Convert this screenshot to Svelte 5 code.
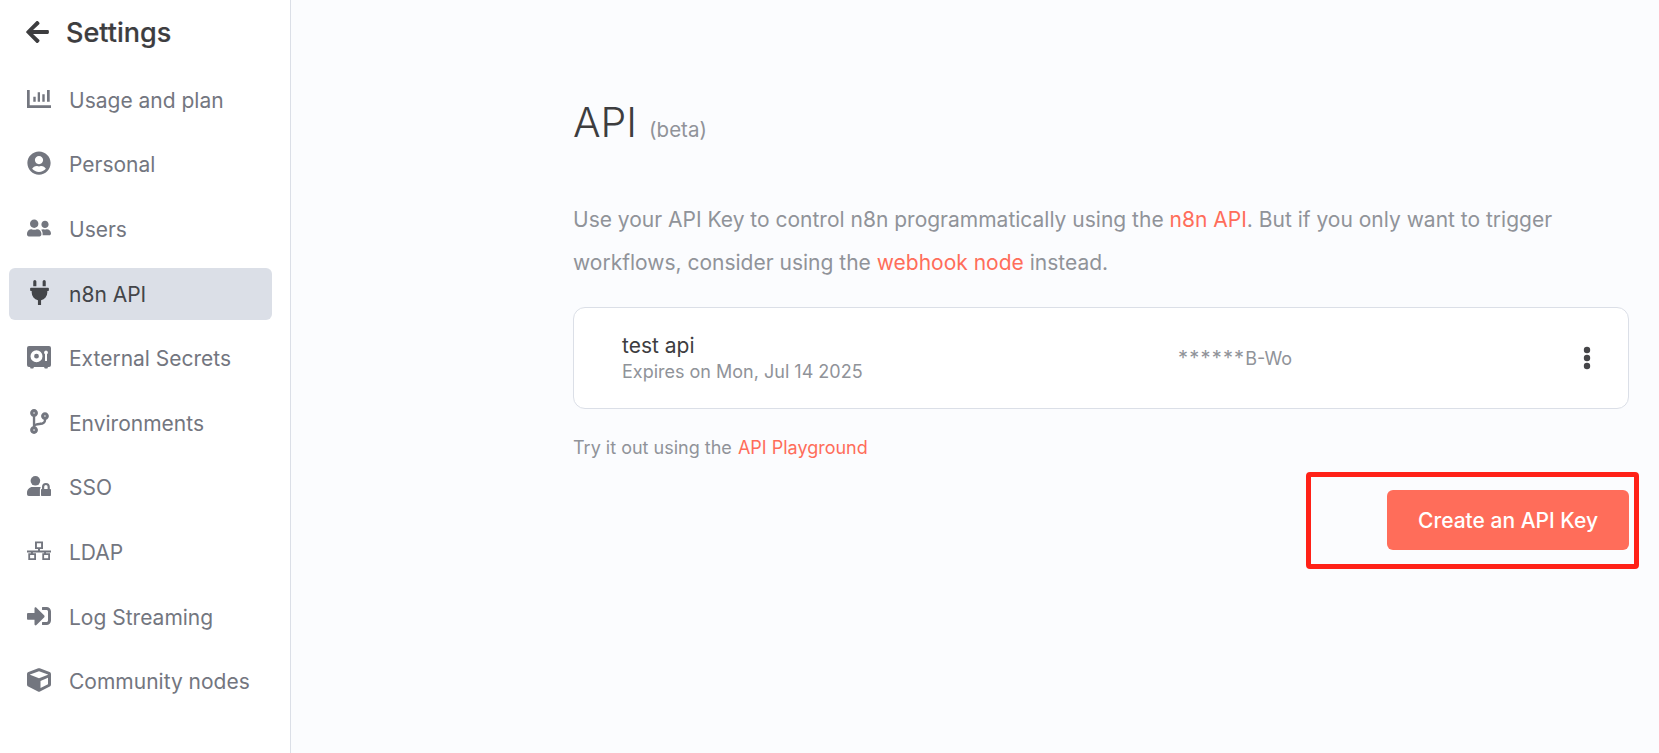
<script>
	const nav = [
		{ label: 'Usage and plan', icon: 'chart' },
		{ label: 'Personal', icon: 'user' },
		{ label: 'Users', icon: 'users' },
		{ label: 'n8n API', icon: 'plug', active: true },
		{ label: 'External Secrets', icon: 'vault' },
		{ label: 'Environments', icon: 'branch' },
		{ label: 'SSO', icon: 'lock' },
		{ label: 'LDAP', icon: 'network' },
		{ label: 'Log Streaming', icon: 'signin' },
		{ label: 'Community nodes', icon: 'cube' },
	];
</script>

<div class="layout">
	<aside class="sidebar">
		<header class="side-head">
			<svg class="back" viewBox="0 0 448 512"><path d="M257.5 445.1l-22.2 22.2c-9.4 9.4-24.6 9.4-33.9 0L7 273c-9.4-9.4-9.4-24.6 0-33.9L201.4 44.7c9.4-9.4 24.6-9.4 33.9 0l22.2 22.2c9.5 9.5 9.3 25-.4 34.3L136.6 216H424c13.3 0 24 10.7 24 24v32c0 13.3-10.7 24-24 24H136.6l120.5 114.8c9.8 9.3 10 24.8.4 34.3z"/></svg>
			<span>Settings</span>
		</header>
		<nav>
			{#each nav as item}
				<div class="item" class:active={item.active}>
					<span class="ic">
						{#if item.icon === 'chart'}
							<svg viewBox="0 0 24 24"><path d="M0 3h2.700v15.300H24V21H0z"/><path d="M6.300 9.700h2.400v5H6.300zM10.700 5.300H13v9.400h-2.300zM15.300 7.300h2.400v7.400h-2.400zM20 3h2.700v11.700H20z"/></svg>
						{:else if item.icon === 'user'}
							<svg viewBox="0 0 496 512"><path d="M248 8C111 8 0 119 0 256s111 248 248 248 248-111 248-248S385 8 248 8zm0 96c48.6 0 88 39.4 88 88s-39.4 88-88 88-88-39.4-88-88 39.4-88 88-88zm0 344c-58.7 0-111.3-26.6-146.5-68.2 18.8-35.4 55.6-59.8 98.5-59.8 2.4 0 4.8.4 7.1 1.1 13 4.2 26.6 6.9 40.9 6.9 14.3 0 28-2.7 40.9-6.9 2.3-.7 4.7-1.1 7.1-1.1 42.9 0 79.7 24.4 98.5 59.8C359.3 421.4 306.7 448 248 448z"/></svg>
						{:else if item.icon === 'users'}
							<svg viewBox="0 0 640 512"><path d="M192 256c61.9 0 112-50.1 112-112S253.9 32 192 32 80 82.1 80 144s50.1 112 112 112zm76.8 32h-8.3c-20.8 10-43.9 16-68.5 16s-47.6-6-68.5-16h-8.3C51.6 288 0 339.6 0 403.2V432c0 26.5 21.5 48 48 48h288c26.5 0 48-21.5 48-48v-28.8c0-63.6-51.6-115.2-115.2-115.2zM480 256c53 0 96-43 96-96s-43-96-96-96-96 43-96 96 43 96 96 96zm48 32h-3.8c-13.9 4.8-28.6 8-44.2 8s-30.3-3.2-44.2-8H432c-20.4 0-39.2 5.9-55.7 15.4 24.4 26.3 39.7 61.2 39.7 99.8v38.4c0 2.2-.5 4.3-.6 6.4H592c26.5 0 48-21.5 48-48 0-61.9-50.1-112-112-112z"/></svg>
						{:else if item.icon === 'plug'}
							<svg class="plug" viewBox="0 0 384 512"><path d="M320,32a32,32,0,0,0-64,0v96h64Zm48,128H16A16,16,0,0,0,0,176v32a16,16,0,0,0,16,16H32v32A160.07,160.07,0,0,0,160,412.8V512h64V412.8A160.07,160.07,0,0,0,352,256V224h16a16,16,0,0,0,16-16V176A16,16,0,0,0,368,160ZM128,32a32,32,0,0,0-64,0v96h64Z"/></svg>
						{:else if item.icon === 'vault'}
							<svg viewBox="0 0 24 24"><path fill-rule="evenodd" d="M2 1h20a2 2 0 0 1 2 2v17a2 2 0 0 1-2 2h-1l-.6 1.600h-2.600L17 22H7l-.8 1.600H3.600L3 22H2a2 2 0 0 1-2-2V3a2 2 0 0 1 2-2zM9.500 5.200a6 6 0 1 0 0 12a6 6 0 0 0 0-12zM9.500 8.800a2.400 2.400 0 1 1 0 4.800a2.400 2.400 0 0 1 0-4.800zM19 5.500a2 2 0 0 0-1 3.700V16h2V9.200a2 2 0 0 0-1-3.700z"/></svg>
						{:else if item.icon === 'branch'}
							<svg class="branch" viewBox="0 0 384 512"><path d="M384 144c0-44.2-35.8-80-80-80s-80 35.8-80 80c0 36.4 24.3 67.1 57.5 76.8-.6 16.1-4.2 28.5-11 36.9-15.4 19.2-49.3 22.4-85.2 25.7-28.2 2.6-57.4 5.4-81.3 16.9v-144c32.5-10.2 56-40.5 56-76.3 0-44.2-35.8-80-80-80S0 35.8 0 80c0 35.8 23.5 66.1 56 76.3v199.3C23.5 365.9 0 396.2 0 432c0 44.2 35.8 80 80 80s80-35.8 80-80c0-34-21.2-63.1-51.2-74.6 3.1-5.2 7.8-9.8 14.9-13.4 16.2-8.2 40.4-10.4 66.1-12.8 42.2-3.9 90-8.4 118.2-43.4 14-17.4 21.1-39.8 21.6-67.9 31.6-10.8 54.4-40.7 54.4-75.9zM80 64c8.800 0 16 7.200 16 16s-7.200 16-16 16-16-7.200-16-16 7.200-16 16-16zm0 384c-8.800 0-16-7.200-16-16s7.200-16 16-16 16 7.200 16 16-7.200 16-16 16zm224-320c8.800 0 16 7.200 16 16s-7.200 16-16 16-16-7.200-16-16 7.200-16 16-16z"/></svg>
						{:else if item.icon === 'lock'}
							<svg viewBox="0 0 24 20"><circle cx="8.400" cy="4.800" r="4.800"/><path d="M5.500 11h6c.9 0 1.700.1 2.400.4-.6.500-1 1.300-1 2.200V20H1.800A1.800 1.800 0 0 1 0 18.200v-1.700C0 13.500 2.500 11 5.500 11z"/><path fill-rule="evenodd" d="M15 13v-2.200a3.900 3.900 0 0 1 7.800 0V13h.2c.6 0 1 .4 1 1v5c0 .6-.4 1-1 1h-8c-.6 0-1-.4-1-1v-5c0-.6.4-1 1-1zm2.200 0h3.400v-2.200a1.700 1.700 0 0 0-3.400 0z"/></svg>
						{:else if item.icon === 'network'}
							<svg viewBox="0 0 24 19"><path fill-rule="evenodd" d="M8 0h8v7.500h-3v1.600h11v1.900h-5v.7h4v6.800h-7.700v-6.800h1.800V11H5.900v.7H9v6.800H1.300v-6.800h2.700V11H0V9.100h11V7.500H8zM9.900 1.800v3.900h4.200V1.800zM3.100 13.400v3.300h4.100v-3.300zM17.100 13.400v3.300h4.100v-3.300z"/></svg>
						{:else if item.icon === 'signin'}
							<svg viewBox="0 0 512 512"><path d="M416 448h-84c-6.600 0-12-5.400-12-12v-40c0-6.600 5.400-12 12-12h84c17.700 0 32-14.300 32-32V160c0-17.700-14.300-32-32-32h-84c-6.600 0-12-5.400-12-12V76c0-6.600 5.400-12 12-12h84c53 0 96 43 96 96v192c0 53-43 96-96 96zm-47-201L201 79c-15-15-41-4.500-41 17v96H24c-13.300 0-24 10.700-24 24v96c0 13.300 10.700 24 24 24h136v96c0 21.500 26 32 41 17l168-168c9.300-9.400 9.300-24.600 0-34z"/></svg>
						{:else if item.icon === 'cube'}
							<svg viewBox="0 0 512 512"><path d="M239.100 6.300l-208 78c-18.700 7-31.100 25-31.100 45v225.100c0 18.200 10.300 34.800 26.500 42.900l208 104c13.500 6.800 29.400 6.800 42.900 0l208-104c16.300-8.100 26.500-24.800 26.500-42.900V129.300c0-20-12.400-37.900-31.100-44.900l-208-78C262 2.200 250 2.200 239.100 6.300zM256 68.400l192 72v1.100l-192 78-192-78v-1.100l192-72zm32 356V275.500l160-65v133.900l-160 80z"/></svg>
						{/if}
					</span>
					<span class="label">{item.label}</span>
				</div>
			{/each}
		</nav>
	</aside>

	<main class="main">
		<div class="content">
			<h1>API<small>(beta)</small></h1>
			<p class="intro">Use your API Key to control n8n programmatically using the <a href="#api">n8n API</a>. But if you only want to trigger workflows, consider using the <a href="#webhook">webhook node</a> instead.</p>
			<div class="card">
				<div class="who">
					<div class="name">test api</div>
					<div class="exp">Expires on Mon, Jul 14 2025</div>
				</div>
				<div class="key"><span class="stars">******</span>B-Wo</div>
				<svg class="dots" viewBox="0 0 8 24"><circle cx="4" cy="4" r="3.200"/><circle cx="4" cy="12" r="3.200"/><circle cx="4" cy="20" r="3.200"/></svg>
			</div>
			<p class="try">Try it out using the <a href="#play">API Playground</a></p>
			<div class="actions">
				<button>Create an API Key</button>
				<div class="annotation"></div>
			</div>
		</div>
	</main>
</div>

<style>
	:global(body) { margin: 0; font-family: Inter, "Liberation Sans", sans-serif; background: #fbfcfe; }
	.layout { display: flex; height: 753px; overflow: hidden; }
	.sidebar { width: 291px; flex: none; box-sizing: border-box; background: #fff; border-right: 1px solid #dbdfe7; padding: 0 18px 0 9px; }
	.side-head { display: flex; align-items: center; height: 64px; padding-left: 17px; color: #3d3d3f; font-size: 27px; font-weight: 500; -webkit-text-stroke: 0.2px #3d3d3f; }
	.back { width: 23px; height: 26px; fill: #3d3d3f; margin-right: 17px; }
	nav { margin-top: 10px; }
	.item { display: flex; align-items: center; height: 52.5px; margin-bottom: 12.1px; border-radius: 6px; padding-left: 18px; color: #73767f; font-size: 21px; }
	.item.active { background: #dbdfe7; color: #434549; }
	.ic { width: 24px; height: 24px; flex: none; display: flex; align-items: center; justify-content: center; margin: -3px 18px 0 0; }
	.ic svg { width: 24px; height: 24px; fill: currentColor; }
	.ic svg.plug, .ic svg.branch { width: 19px; height: 25px; }
	.main { flex: 1; min-width: 0; }
	.content { margin-left: 282px; width: 1056px; padding-top: 96px; position: relative; }
	h1 { margin: 0; font-size: 41px; font-weight: 300; line-height: 52px; color: #3d3d3f; }
	h1 small { font-size: 20.5px; color: #909399; font-weight: 400; margin-left: 12px; }
	.intro { margin: 42px 0 0; font-size: 21px; line-height: 43px; color: #909399; }
	a { color: #ff6d5a; text-decoration: none; }
	.card { margin-top: 23px; height: 102px; box-sizing: border-box; background: #fff; border: 1px solid #dbdfe7; border-radius: 12px; display: flex; align-items: center; padding-left: 48px; padding-right: 37px; }
	.who { width: 556px; }
	.name { font-size: 21px; color: #3d3d3f; line-height: 27px; }
	.exp { font-size: 18px; color: #909399; line-height: 25px; }
	.key { flex: 1; font-size: 18px; color: #909399; }
	.stars { font-size: 20px; letter-spacing: 1.2px; }
	.dots { width: 8px; height: 24px; fill: #454548; }
	.try { margin: 26px 0 0; font-size: 18px; line-height: 26px; color: #909399; }
	.try a { margin-left: 1px; }
	.actions { display: flex; justify-content: flex-end; margin-top: 29px; position: relative; }
	button { width: 242px; height: 60px; border: none; border-radius: 6px; background: #ff6d5a; color: #fff; font: 500 21px Inter, sans-serif; }
	.annotation { position: absolute; left: 733px; top: -18px; width: 333px; height: 97px; box-sizing: border-box; border: 5px solid #ff2117; border-radius: 4px; }
</style>
